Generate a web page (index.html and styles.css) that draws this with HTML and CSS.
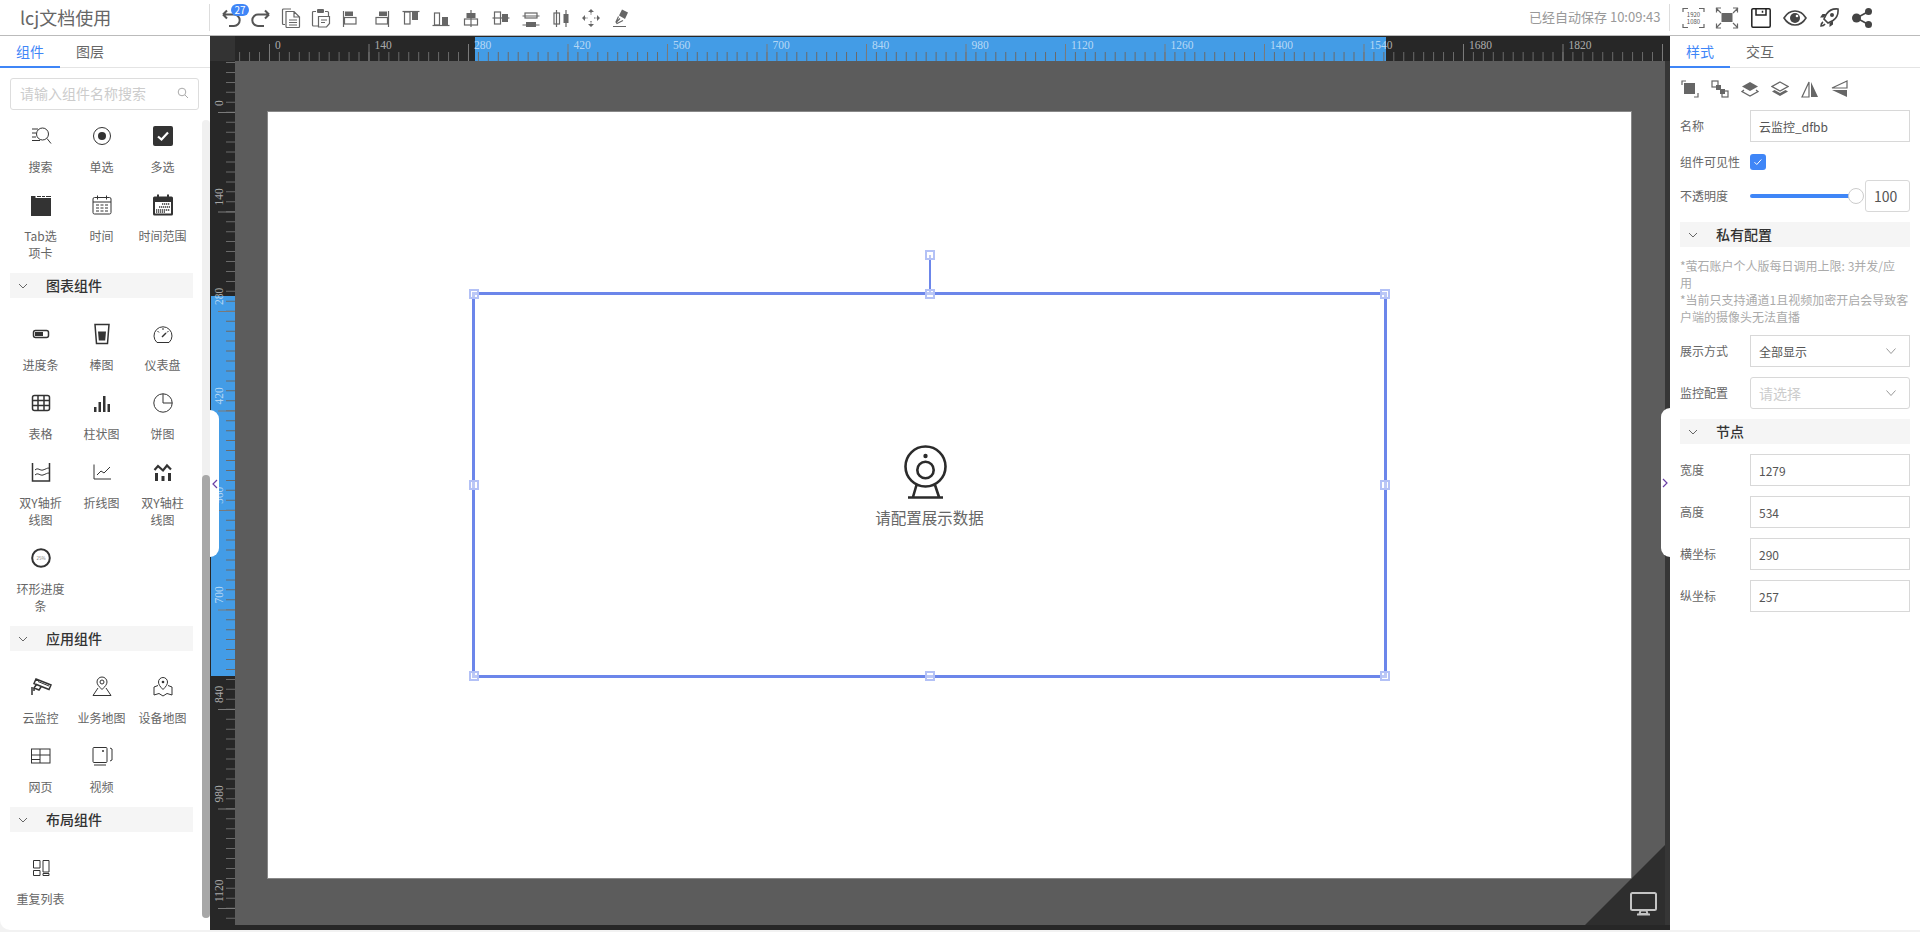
FILE: index.html
```html
<!DOCTYPE html>
<html lang="zh-CN">
<head>
  <meta charset="UTF-8">
  <meta name="viewport" content="width=device-width, initial-scale=1.0">
  <title>lcj文档使用</title>
  <link rel="stylesheet" href="styles.css">
</head>
<body>
  <header class="topbar">
    <div class="logo">lcj文档使用</div>
    <div class="tools">
      <div class="tool">
        <svg viewBox="0 0 20 20"><path class="ln" d="M2 6.500L6 2.500M2 6.500L6 10.500M2 6.500H13a5.700 5.700 0 0 1 0 11.400H8"/></svg>
        <span class="badge">27</span>
      </div>
      <div class="tool"><svg viewBox="0 0 20 20"><path class="ln" d="M18 6.500L14 2.500M18 6.500L14 10.500M18 6.500H7a5.700 5.700 0 0 0 0 11.400H13"/></svg></div>
      <div class="tool"><svg viewBox="0 0 20 20"><path class="thin" d="M4 16.500H2.500a1 1 0 0 1-1-1V2a1 1 0 0 1 1-1H10"/><path class="thin" d="M5 3.500h8l5.500 5.500v9.500a1 1 0 0 1-1 1H6a1 1 0 0 1-1-1zM13 3.500V9h5.500M8 12h8M8 14.500h8M8 17h8"/></svg></div>
      <div class="tool"><svg viewBox="0 0 20 20"><path class="thin" d="M5 3.500H2.500a1 1 0 0 0-1 1V17a1 1 0 0 0 1 1H7M14 3.500h2.500a1 1 0 0 1 1 1V8"/><rect class="fill" x="6" y="1" width="7" height="4" rx="1"/><path class="thin" d="M7.500 8.500h11v7l-3 3.500h-8zM10 12h6M10 14.500h4"/></svg></div>
      <div class="tool"><svg viewBox="0 0 20 20"><path class="thin" d="M2.500 3v16"/><rect class="fill" x="4" y="3.500" width="8" height="4.500"/><rect class="thin" x="3.500" y="9.500" width="11.500" height="6.500"/></svg></div>
      <div class="tool"><svg viewBox="0 0 20 20"><path class="thin" d="M17.500 3v16"/><rect class="fill" x="8" y="3.500" width="8" height="4.500"/><rect class="thin" x="5" y="9.500" width="11.500" height="6.500"/></svg></div>
      <div class="tool"><svg viewBox="0 0 20 20"><path class="thin" d="M1.500 3.500h17"/><rect class="thin" x="3.500" y="4" width="5.500" height="12"/><rect class="fill" x="11" y="4" width="6" height="8"/></svg></div>
      <div class="tool"><svg viewBox="0 0 20 20"><path class="thin" d="M1.500 17.500h17"/><rect class="thin" x="3.500" y="5" width="5" height="12"/><rect class="fill" x="11" y="9" width="6" height="8"/></svg></div>
      <div class="tool"><svg viewBox="0 0 20 20"><path class="thin" d="M10 2v17"/><rect class="fill" x="5.500" y="5" width="9" height="5"/><rect class="thin" x="3.500" y="11" width="13" height="6"/></svg></div>
      <div class="tool"><svg viewBox="0 0 20 20"><path class="thin" d="M1.500 10h17"/><rect class="thin" x="3.500" y="4" width="6" height="12" fill="#fff"/><rect class="fill" x="11" y="6" width="6" height="8"/></svg></div>
      <div class="tool"><svg viewBox="0 0 20 20"><path class="thin" d="M1.500 8h17M1.500 17h17"/><rect class="thin" x="4" y="5" width="12" height="5" fill="#fff"/><rect class="fill" x="5" y="14" width="10" height="5"/></svg></div>
      <div class="tool"><svg viewBox="0 0 20 20"><path class="thin" d="M5.500 2v17M15 2v17"/><rect class="thin" x="3" y="5" width="5.500" height="11" fill="#fff"/><rect class="fill" x="12.500" y="6" width="5" height="9"/></svg></div>
      <div class="tool"><svg viewBox="0 0 20 20"><path class="fill" d="M10 1l3 3H7zM10 19l3-3H7zM1 10l3-3v6zM19 10l-3-3v6z"/><path class="thin dash" d="M10 4v3M10 13v3M4 10h3M13 10h3"/></svg></div>
      <div class="tool"><svg viewBox="0 0 20 20"><path class="fill" d="M11 1.500l6 3-3 6.500-6-3.500z"/><path class="thin" d="M7.500 8.500L5 14l1 1.500 6-3M5 14.500l4-4M2 18.500h13"/></svg></div>
    </div>
    <div class="save-info">已经自动保存 10:09:43</div>
    <div class="actions">
      <svg class="act act-res" viewBox="0 0 23 22"><path class="thin" d="M1 5V1.500h5M17 1.500h5V5M1 17v3.500h5M17 20.500h5V17"/><text class="res-text" x="11.500" y="9.500">1920</text><text class="res-text" x="11.500" y="16.500">1080</text></svg>
      <svg class="act act-full" viewBox="0 0 24 22"><rect class="fill" x="7" y="6.500" width="10" height="8" stroke="#666"/><path class="thin" d="M1 1l5 5M1.500 5.500V1h4.500M23 1l-5 5M22.500 5.500V1H18M1 21l5-5M1.500 16.500V21h4.500M23 21l-5-5M22.500 16.500V21H18"/></svg>
      <svg class="act act-save" viewBox="0 0 20 20"><path class="blk" d="M2 .8h16a1.200 1.200 0 0 1 1.200 1.200v16a1.200 1.200 0 0 1-1.200 1.200H2A1.200 1.200 0 0 1 .8 18V2A1.200 1.200 0 0 1 2 .8zM5 .8V7h10V.8M11.500 2.800v2"/></svg>
      <svg class="act act-eye" viewBox="0 0 24 16"><path class="eye" d="M1 8c3-5 7-7 11-7s8 2 11 7c-3 5-7 7-11 7S4 13 1 8z"/><circle class="fill dark" cx="12" cy="8" r="5"/><circle cx="14" cy="6" r="1.300" fill="#fff"/></svg>
      <svg class="act act-rocket" viewBox="0 0 20 20"><path class="eye" d="M19 1c-5-.5-9 1.500-11.500 5L5 11l4 4 5-2.500c3.500-2.500 5.500-6.500 5-11.500z"/><circle class="fill dark" cx="13" cy="7" r="2"/><path class="fill dark" d="M7 6H3.500L1 9.500h4zM14 13v3.500L10.500 19v-4z"/><path class="eye" d="M4 14c-1.500 1-2 3-2 4 1 0 3-.5 4-2"/></svg>
      <svg class="act act-share" viewBox="0 0 21 20"><path class="eye" d="M16.500 3.500L4.500 10l12 6.500"/><circle class="fill dark" cx="4.500" cy="10" r="4.500"/><circle class="fill dark" cx="16.500" cy="3.500" r="3.500"/><circle class="fill dark" cx="16.500" cy="16.500" r="3.500"/></svg>
    </div>
  </header>

  <main class="workbench">
    <aside class="left-panel">
      <div class="tabs">
        <div class="tab active">组件</div>
        <div class="tab">图层</div>
      </div>
      <div class="search">
        <span>请输入组件名称搜索</span>
        <svg viewBox="0 0 12 12"><circle cx="5" cy="5" r="3.800"/><path d="M8 8l3 3"/></svg>
      </div>
      <div class="widgets">
        <div class="grid">
          <div class="item"><svg viewBox="0 0 24 24"><path class="s" d="M3 5h6M3 9h4M3 13h4M3 16.500h8"/><circle class="s" cx="13.500" cy="10" r="6"/><path class="s" d="M18 14.500l4 5"/></svg><span>搜索</span></div>
          <div class="item"><svg viewBox="0 0 24 24"><circle class="s" cx="12" cy="12" r="8.500"/><circle class="f" cx="12" cy="12" r="4"/></svg><span>单选</span></div>
          <div class="item"><svg viewBox="0 0 24 24"><rect class="f" x="2" y="2" width="20" height="20" rx="2"/><path class="w" d="M7 12.500l3.500 3 6.500-7"/></svg><span>多选</span></div>
          <div class="item"><svg viewBox="0 0 24 24"><path class="f" d="M2 3h4.500v2H22v17.500a.5.5 0 0 1-.5.5h-19a.5.5 0 0 1-.5-.5zM8 3h4v1H8zM13 3h3v1h-3zM17 3h5v1h-5z"/></svg><span>Tab选<br>项卡</span></div>
          <div class="item"><svg viewBox="0 0 24 24"><rect class="s" x="3" y="4.500" width="18" height="16.500" rx="1.500"/><path class="s" d="M3 9h18M7.500 2.500v4M16.500 2.500v4M6 12h3M10.500 12h3M15 12h3M6 15h3M10.500 15h3M15 15h3M6 18h3M10.500 18h3M15 18h3"/></svg><span>时间</span></div>
          <div class="item"><svg viewBox="0 0 24 24"><rect class="f" x="2" y="3.500" width="20" height="19" rx="1.500"/><rect x="4" y="9" width="16" height="11.500" fill="#fff"/><path class="f" d="M6 1.500h2v4H6zM16 1.500h2v4h-2z"/><path class="dots" d="M11 11h8M8 14h11M5 17h14M5 19h9"/></svg><span>时间范围</span></div>
        </div>
        <div class="section"><svg viewBox="0 0 10 6"><path d="M1 1l4 4 4-4"/></svg><b>图表组件</b></div>
        <div class="grid">
          <div class="item"><svg viewBox="0 0 24 24"><rect class="s2" x="4.500" y="8.500" width="15" height="7" rx="2"/><rect class="f" x="6" y="10" width="8" height="4"/></svg><span>进度条</span></div>
          <div class="item"><svg viewBox="0 0 24 24"><path class="s2" d="M5 2.500h14l-1.500 19h-11z"/><path class="f" d="M8 9.500h8l-.8 9H8.800z"/></svg><span>棒图</span></div>
          <div class="item"><svg viewBox="0 0 24 24"><path class="s" d="M6 20.500a9 9 0 1 1 12 0zM12 6v2M6.500 9l1.500 1.500M17.500 9L16 10.500"/><path class="s2" d="M11 15l4-4"/></svg><span>仪表盘</span></div>
          <div class="item"><svg viewBox="0 0 24 24"><rect class="s2" x="3.500" y="4.500" width="17" height="15" rx="2"/><path class="s2" d="M3.500 9.500h17M3.500 14.500h17M9 4.500v15M15 4.500v15"/></svg><span>表格</span></div>
          <div class="item"><svg viewBox="0 0 24 24"><path class="f" d="M4 16h2.500v5H4zM8.500 11h2.500v10H8.500zM13 5h2.500v16H13zM17.500 13H20v8h-2.500z"/></svg><span>柱状图</span></div>
          <div class="item"><svg viewBox="0 0 24 24"><circle class="s" cx="12" cy="12" r="9.200"/><path class="s" d="M12 2.800V12h9.200"/></svg><span>饼图</span></div>
          <div class="item"><svg viewBox="0 0 24 24"><path class="s2" d="M3.500 3v18h17V3"/><path class="s" d="M6 10c3-3 5 1 8 0s4-2 6-2M6 15c3-3 5 1 8 0s4-2 6-2"/></svg><span>双Y轴折<br>线图</span></div>
          <div class="item"><svg viewBox="0 0 24 24"><path class="s" d="M4 4.500V19h17"/><path class="s" d="M7 15l4-4 3 2 6-6"/></svg><span>折线图</span></div>
          <div class="item"><svg viewBox="0 0 24 24"><path class="s2 thick" d="M3.500 10l3.500-4 5 4.500 4-5 4 4"/><path class="f" d="M4 13h3v8H4zM10.500 16h3v5h-3zM17 13h3v8h-3z"/></svg><span>双Y轴柱<br>线图</span></div>
          <div class="item"><svg viewBox="0 0 24 24"><circle class="ring" cx="12" cy="12" r="8.800"/><text class="ring-text" x="12" y="13.500">25%</text></svg><span>环形进度<br>条</span></div>
        </div>
        <div class="section"><svg viewBox="0 0 10 6"><path d="M1 1l4 4 4-4"/></svg><b>应用组件</b></div>
        <div class="grid">
          <div class="item"><svg viewBox="0 0 24 24"><path class="s2" d="M7 4l15 6-2 4.500-15-6zM7.500 9.500L5 13l5 2 2-3M5 13v3M3 12v8"/><path class="s" d="M9 6.500l11 4.500"/></svg><span>云监控</span></div>
          <div class="item"><svg viewBox="0 0 24 24"><path class="s" d="M12 14.500c-3-3-5-5-5-7.500a5 5 0 0 1 10 0c0 2.500-2 4.500-5 7.500z"/><circle class="s" cx="12" cy="7" r="2"/><path class="s" d="M8 13l-5 7.500h18L16 13"/></svg><span>业务地图</span></div>
          <div class="item"><svg viewBox="0 0 24 24"><path class="s" d="M12 14.500c-3-3-4.500-5-4.500-7.500a4.500 4.500 0 0 1 9 0c0 2.500-1.500 4.500-4.500 7.500z"/><circle class="f" cx="12" cy="7" r="1.300"/><path class="s" d="M7 10.500L3 12v8l5-1.500 4 2.500 4-2.500 5 1.500v-8l-4-1.500"/></svg><span>设备地图</span></div>
          <div class="item"><svg viewBox="0 0 24 24"><rect class="s" x="2.500" y="5" width="18.500" height="14"/><path class="s" d="M11 5v14M2.500 11H21M2.500 15.500H11"/></svg><span>网页</span></div>
          <div class="item"><svg viewBox="0 0 24 24"><path class="s" d="M4 3.500h12a1 1 0 0 1 1 1v13a1 1 0 0 1-1 1H4a1 1 0 0 1-1-1v-13a1 1 0 0 1 1-1zM4 21h12M20 4l2 1v11l-2 1"/><circle class="f" cx="13" cy="7" r="1"/></svg><span>视频</span></div>
        </div>
        <div class="section"><svg viewBox="0 0 10 6"><path d="M1 1l4 4 4-4"/></svg><b>布局组件</b></div>
        <div class="grid">
          <div class="item"><svg viewBox="0 0 24 24"><path class="s" d="M4.500 4.500H11V12H4.500zM14 4.500h6V16h-6zM4.500 14.500H11v5H4.500zM14 17.500h6v2h-6z"/></svg><span>重复列表</span></div>
        </div>
      </div>
      <div class="scroll-track"><div class="scroll-thumb"></div></div>
    </aside>

    <section class="stage">
      <div class="ruler-corner"></div>
      <svg class="ruler ruler-x" viewBox="0 0 1435 25">
        <rect class="ruler-mark" x="240" y="1" width="911" height="24"/>
        <line class="tick" x1="4.100" y1="20.500" x2="1430" y2="20.500"/>
        <line class="tick-major" x1="34" y1="16.500" x2="1430" y2="16.500"/>
        <g class="ruler-text">
          <text x="40" y="13">0</text><text x="139.500" y="13">140</text><text x="239" y="13">280</text><text x="338.500" y="13">420</text>
          <text x="438" y="13">560</text><text x="537.500" y="13">700</text><text x="637" y="13">840</text><text x="736.500" y="13">980</text>
          <text x="836" y="13">1120</text><text x="935.500" y="13">1260</text><text x="1035" y="13">1400</text><text x="1134.500" y="13">1540</text>
          <text x="1234" y="13">1680</text><text x="1333.500" y="13">1820</text>
        </g>
      </svg>
      <svg class="ruler ruler-y" viewBox="0 0 25 869">
        <rect class="ruler-mark" x="1" y="235" width="24" height="380"/>
        <line class="tick" x1="20.500" y1="1" x2="20.500" y2="864"/>
        <line class="tick-major" x1="16.500" y1="51" x2="16.500" y2="864"/>
        <g class="ruler-text">
          <text transform="translate(12.500 45) rotate(-90)">0</text>
          <text transform="translate(12.500 144.500) rotate(-90)">140</text>
          <text transform="translate(12.500 244) rotate(-90)">280</text>
          <text transform="translate(12.500 343.500) rotate(-90)">420</text>
          <text transform="translate(12.500 443) rotate(-90)">560</text>
          <text transform="translate(12.500 542.500) rotate(-90)">700</text>
          <text transform="translate(12.500 642) rotate(-90)">840</text>
          <text transform="translate(12.500 741.500) rotate(-90)">980</text>
          <text transform="translate(12.500 841) rotate(-90)">1120</text>
        </g>
      </svg>

      <div class="workspace">
        <div class="page">
          <div class="frame">
            <i class="rotate-line"></i>
            <i class="handle h-rotate"></i>
            <i class="handle h-tl"></i><i class="handle h-tc"></i><i class="handle h-tr"></i>
            <i class="handle h-ml"></i><i class="handle h-mr"></i>
            <i class="handle h-bl"></i><i class="handle h-bc"></i><i class="handle h-br"></i>
            <svg class="webcam" viewBox="0 0 44 54">
              <circle cx="21.500" cy="21.500" r="20"/>
              <circle cx="21.500" cy="25" r="8.200"/>
              <circle class="webcam-dot" cx="21.500" cy="11" r="2.200"/>
              <path d="M12.500 40L9 52M31 40l4 12M4 52.500h35"/>
            </svg>
            <p class="frame-tip">请配置展示数据</p>
          </div>
        </div>
        <div class="device-corner">
          <svg viewBox="0 0 27 24"><rect x="1" y="1" width="25" height="17" rx="1.500"/><path d="M10.500 18.500h6l1 3.500h-8zM7 22.500h13"/></svg>
        </div>
      </div>
      <div class="strip-right"></div>
      <div class="strip-bottom"></div>

      <div class="collapse collapse-left"><svg viewBox="0 0 6 10"><path d="M5 1L1 5l4 4"/></svg></div>
      <div class="collapse collapse-right"><svg viewBox="0 0 6 10"><path d="M1 1l4 4-4 4"/></svg></div>
    </section>

    <aside class="right-panel">
      <div class="tabs">
        <div class="tab active">样式</div>
        <div class="tab">交互</div>
      </div>
      <div class="props">
        <div class="layer-tools">
          <svg viewBox="0 0 18 18"><path class="thin" d="M5 1H1v4M13 17h4v-4"/><rect class="fill" x="3" y="3" width="11" height="11"/></svg>
          <svg viewBox="0 0 18 18"><rect class="thin" x="1" y="1" width="6" height="6"/><rect class="thin" x="11" y="11" width="6" height="6"/><rect class="fill" x="5" y="5" width="5" height="5"/><rect class="fill" x="9" y="9" width="5" height="5"/></svg>
          <svg viewBox="0 0 18 18"><path class="fill" d="M9 2l8 4.500L9 11 1 6.500z"/><path class="thin" d="M3 10l-2 1.500L9 16l8-4.500-2-1.500"/></svg>
          <svg viewBox="0 0 18 18"><path class="thin" d="M9 2l8 4.500L9 11 1 6.500z"/><path class="fill" d="M3.500 10L1 11.500 9 16l8-4.500-2.500-1.500L9 13z"/></svg>
          <svg viewBox="0 0 18 18"><path class="thin" d="M8 2L1 17h7z"/><path class="fill" d="M10 2l7 15h-7z"/></svg>
          <svg viewBox="0 0 18 18"><path class="thin" d="M16 1L1 8h15z"/><path class="fill" d="M16 10H1l15 7z"/></svg>
        </div>
        <div class="row"><label>名称</label><div class="field">云监控_dfbb</div></div>
        <div class="row row-check"><label>组件可见性</label><div class="check"><svg viewBox="0 0 16 16"><path d="M4.500 8.200l2.300 2.300 4.500-5"/></svg></div></div>
        <div class="row">
          <label>不透明度</label>
          <div class="slider"><div class="slider-thumb"></div></div>
          <div class="field field-num">100</div>
        </div>
        <div class="section"><svg viewBox="0 0 10 6"><path d="M1 1l4 4 4-4"/></svg><b>私有配置</b></div>
        <p class="notes">*萤石账户个人版每日调用上限: 3并发/应<br>用<br>*当前只支持通道1且视频加密开启会导致客<br>户端的摄像头无法直播</p>
        <div class="row"><label>展示方式</label><div class="field select">全部显示<svg viewBox="0 0 10 6"><path d="M.5.5L5 5.500 9.500.5"/></svg></div></div>
        <div class="row"><label>监控配置</label><div class="field select empty">请选择<svg viewBox="0 0 10 6"><path d="M.5.5L5 5.500 9.500.5"/></svg></div></div>
        <div class="section"><svg viewBox="0 0 10 6"><path d="M1 1l4 4 4-4"/></svg><b>节点</b></div>
        <div class="row"><label>宽度</label><div class="field">1279</div></div>
        <div class="row"><label>高度</label><div class="field">534</div></div>
        <div class="row"><label>横坐标</label><div class="field">290</div></div>
        <div class="row"><label>纵坐标</label><div class="field">257</div></div>
      </div>
    </aside>
  </main>
</body>
</html>
```

FILE: styles.css
```css
:root {
  --primary: #3f86f7;
  --text: #666;
  --dark: #333;
  --tool: #666;
  --line: #d8d8d8;
  --ruler: #272727;
  --mark: #439ce6;
  --select: #6c86ea;
}

* {
  box-sizing: border-box;
}

body {
  margin: 0;
  height: 100vh;
  overflow: hidden;
  background-color: #f2f2f2;
  color: var(--text);
  font-family: "Noto Sans CJK SC", "Noto Sans", sans-serif;
  font-size: 12px;
}

/* shared svg strokes for toolbar icons */
.ln,
.thin,
.blk,
.eye {
  fill: none;
  stroke: var(--tool);
}

.ln {
  stroke-width: 2;
  stroke: #555;
}

.thin {
  stroke-width: 1.2;
}

.dash {
  stroke-dasharray: 1.5 1;
}

.blk {
  stroke: #222;
  stroke-width: 1.5;
}

.eye {
  stroke: #444;
  stroke-width: 1.6;
}

.fill {
  fill: var(--tool);
}

.fill.dark {
  fill: #444;
}

/* top bar */
.topbar {
  display: flex;
  align-items: center;
  height: 36px;
  background-color: #fff;
  border-bottom: 1px solid #bbb;
}

.logo {
  width: 210px;
  padding-left: 20px;
  font-size: 18px;
  line-height: 27px;
  border-right: 1px solid #ddd;
}

.tools {
  display: flex;
  gap: 10px;
  padding-left: 11px;
  flex: 1;
}

.tool {
  position: relative;
  width: 20px;
  height: 20px;
}

.tool svg {
  display: block;
  width: 20px;
  height: 20px;
}

.badge {
  position: absolute;
  left: 10px;
  top: -4px;
  width: 18px;
  height: 12px;
  border-radius: 6px;
  background-color: var(--primary);
  color: #fff;
  font-size: 10px;
  line-height: 12px;
  text-align: center;
}

.save-info {
  width: 141px;
  height: 27px;
  color: #999;
  font-size: 13px;
  line-height: 25px;
  white-space: nowrap;
  border-right: 1px solid #ddd;
}

.actions {
  display: flex;
  align-items: center;
  width: 250px;
  padding-left: 12px;
}

.act {
  display: block;
  flex: none;
}

.act-res {
  width: 23px;
  height: 22px;
  margin-right: 10px;
}

.act-full {
  width: 24px;
  height: 22px;
  margin-right: 12px;
}

.act-save {
  width: 20px;
  height: 20px;
  margin-right: 12px;
}

.act-eye {
  width: 24px;
  height: 16px;
  margin-right: 12px;
}

.act-rocket {
  width: 20px;
  height: 20px;
  margin-right: 13px;
}

.act-share {
  width: 21px;
  height: 20px;
}

.res-text {
  font-size: 6px;
  fill: #555;
  text-anchor: middle;
}

/* main columns */
.workbench {
  display: flex;
  height: 894px;
}

.left-panel {
  position: relative;
  width: 210px;
  flex: none;
  background-color: #fff;
  border-bottom-left-radius: 10px;
}

.right-panel {
  width: 250px;
  flex: none;
  background-color: #fff;
}

.tabs {
  display: flex;
  height: 32px;
  border-bottom: 1px solid #e4e4e4;
}

.tab {
  width: 60px;
  height: 32px;
  font-size: 14px;
  line-height: 30px;
  text-align: center;
}

.tab.active {
  color: var(--primary);
  border-bottom: 2px solid var(--primary);
}

.search {
  display: flex;
  align-items: center;
  justify-content: space-between;
  height: 32px;
  margin: 10px 11px 0 10px;
  padding: 0 9px 2px;
  border: 1px solid #ddd;
  border-radius: 3px;
  color: #ccc;
  font-size: 14px;
}

.search svg {
  width: 12px;
  height: 12px;
  fill: none;
  stroke: #aaa;
}

.widgets {
  padding: 6px 17px 0 10px;
}

.grid {
  display: grid;
  grid-template-columns: repeat(3, 61px);
}

.grid + .section {
  margin-top: 2px;
}

.section + .grid {
  margin-top: 16px;
}

.item {
  display: flex;
  flex-direction: column;
  align-items: center;
  padding-top: 5px;
  padding-bottom: 10px;
  line-height: 17px;
  text-align: center;
  white-space: nowrap;
}

.item svg {
  display: block;
  width: 24px;
  height: 30px;
  margin-bottom: 7px;
}

.s,
.s2 {
  fill: none;
  stroke: var(--dark);
  stroke-width: 1;
}

.s2 {
  stroke-width: 1.500;
}

.s2.thick {
  stroke-width: 2.200;
}

.f {
  fill: var(--dark);
}

.w {
  fill: none;
  stroke: #fff;
  stroke-width: 2.200;
}

.dots {
  fill: none;
  stroke: var(--dark);
  stroke-width: 1.300;
  stroke-dasharray: 1.300 .7;
}

.ring {
  fill: none;
  stroke: var(--dark);
  stroke-width: 2;
}

.ring-text {
  font-size: 4.500px;
  fill: #777;
  text-anchor: middle;
}

.section {
  display: flex;
  align-items: center;
  height: 25px;
  background-color: #f5f5f5;
  color: var(--dark);
  font-size: 14px;
}

.section svg {
  width: 10px;
  height: 6px;
  margin: 0 0 0 8px;
  fill: none;
  stroke: #666;
}

.section b {
  margin: 0 0 2px 18px;
  font-weight: 500;
}

.scroll-track {
  position: absolute;
  left: 202px;
  top: 84px;
  width: 8px;
  height: 798px;
  border-radius: 4px;
  background-color: #f0f0f0;
}

.scroll-thumb {
  position: absolute;
  left: 0;
  right: 0;
  bottom: 0;
  height: 443px;
  border-radius: 4px;
  background-color: #a7a7a7;
}

/* canvas area */
.stage {
  position: relative;
  display: grid;
  grid-template-columns: 25px 1430px 5px;
  grid-template-rows: 25px 864px 5px;
  width: 1460px;
  flex: none;
  background-color: var(--ruler);
}

.ruler-corner {
  background-color: #333;
}

.ruler {
  display: block;
}

.ruler-x {
  grid-column: 2 / 4;
  width: 1435px;
  height: 25px;
}

.ruler-y {
  grid-row: 2 / 4;
  grid-column: 1;
  width: 25px;
  height: 869px;
}

.ruler-mark {
  fill: var(--mark);
}

.tick {
  stroke: #6a6a6a;
  stroke-width: 9;
  stroke-dasharray: 1 8.950;
}

.tick-major {
  stroke: #7a7a7a;
  stroke-width: 17;
  stroke-dasharray: 1 98.500;
}

.ruler-text text {
  font-family: "Liberation Serif", serif;
  font-size: 11.500px;
  fill: rgba(255, 255, 255, .62);
}

.workspace {
  position: relative;
  grid-column: 2;
  grid-row: 2;
  padding: 50px 0 0 32px;
  background-color: #5c5c5c;
}

.page {
  position: relative;
  width: 1365px;
  height: 768px;
  background-color: #fff;
  border: 1px solid #888;
}

.frame {
  position: absolute;
  left: 204px;
  top: 180px;
  display: flex;
  flex-direction: column;
  align-items: center;
  justify-content: center;
  width: 915px;
  height: 386px;
  padding-top: 2px;
  border: 3px solid var(--select);
}

.handle {
  position: absolute;
  width: 10px;
  height: 10px;
  margin: -5px 0 0 -5px;
  border: 2px solid #b3c1f6;
  background-color: rgba(255, 255, 255, .55);
}

.h-tl { left: -1px; top: -1px; }
.h-tc { left: 50%; top: -1px; }
.h-tr { left: calc(100% + 1px); top: -1px; }
.h-ml { left: -1px; top: 50%; }
.h-mr { left: calc(100% + 1px); top: 50%; }
.h-bl { left: -1px; top: calc(100% + 1px); }
.h-bc { left: 50%; top: calc(100% + 1px); }
.h-br { left: calc(100% + 1px); top: calc(100% + 1px); }
.h-rotate { left: 50%; top: -40px; }

.rotate-line {
  position: absolute;
  left: 50%;
  top: -40px;
  width: 2px;
  height: 40px;
  margin-left: -1px;
  background-color: var(--select);
}

.webcam {
  width: 44px;
  height: 54px;
  margin-right: 8px;
  fill: none;
  stroke: #2b2b2b;
  stroke-width: 2.600;
}

.webcam-dot {
  fill: #2b2b2b;
  stroke: none;
}

.frame-tip {
  margin: 7px 0 0;
  font-size: 15.500px;
  line-height: 22px;
}

.device-corner {
  position: absolute;
  right: 0;
  bottom: 0;
  width: 80px;
  height: 80px;
  background-color: #2e2e2e;
  clip-path: polygon(100% 0, 100% 100%, 0 100%);
}

.device-corner svg {
  position: absolute;
  left: 45px;
  top: 47px;
  width: 27px;
  height: 24px;
  fill: none;
  stroke: #c4c4c4;
  stroke-width: 2;
}

.strip-right {
  grid-column: 3;
  grid-row: 2;
  background-color: #363636;
}

.strip-bottom {
  grid-column: 2 / 4;
  grid-row: 3;
}

.collapse {
  position: absolute;
  display: flex;
  align-items: center;
  background-color: #fff;
}

.collapse svg {
  width: 6px;
  height: 10px;
  fill: none;
  stroke: #6a3fa6;
  stroke-width: 1.200;
}

.collapse-left {
  left: 0;
  top: 374px;
  width: 9px;
  height: 147px;
  padding-left: 2px;
  border-radius: 0 10px 10px 0;
}

.collapse-right {
  right: 0;
  top: 372px;
  width: 9px;
  height: 149px;
  padding-left: 1px;
  border-radius: 10px 0 0 10px;
}

/* property panel */
.props {
  display: flex;
  flex-direction: column;
  gap: 10px;
  padding: 12px 10px 0;
}

.layer-tools {
  display: flex;
  gap: 12px;
  height: 20px;
  padding-left: 1px;
}

.layer-tools svg {
  width: 18px;
  height: 18px;
}

.row {
  display: flex;
  align-items: center;
}

.row label {
  width: 70px;
  flex: none;
  padding-bottom: 2px;
}

.row-check {
  margin-top: 2px;
  height: 16px;
}

.field {
  position: relative;
  display: flex;
  align-items: center;
  flex: 1;
  height: 32px;
  padding-left: 8px;
  border: 1px solid var(--line);
  color: #555;
}

.field-num {
  flex: none;
  width: 45px;
  padding-left: 8px;
  border-radius: 3px;
  font-size: 14px;
}

.select svg {
  position: absolute;
  right: 13px;
  top: 12px;
  width: 10px;
  height: 6px;
  fill: none;
  stroke: #999;
}

.select.empty {
  border-radius: 3px;
  color: #ccc;
  font-size: 14px;
}

.check {
  width: 16px;
  height: 16px;
  border-radius: 3px;
  background-color: var(--primary);
}

.check svg {
  display: block;
  fill: none;
  stroke: #fff;
}

.slider {
  position: relative;
  width: 106px;
  height: 4px;
  margin-right: 9px;
  border-radius: 2px;
  background-color: var(--primary);
}

.slider-thumb {
  position: absolute;
  right: -8px;
  top: -6px;
  width: 16px;
  height: 16px;
  border: 1px solid #ccc;
  border-radius: 50%;
  background-color: #fff;
}

.notes {
  margin: 0;
  color: #aaa;
  line-height: 17px;
}
```
